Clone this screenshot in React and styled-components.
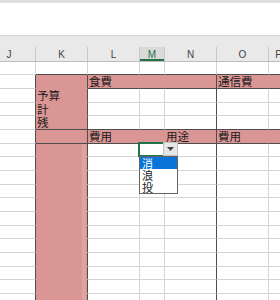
import React from 'react';
import styled, { createGlobalStyle } from 'styled-components';

const GlobalStyle = createGlobalStyle`
  html, body { margin: 0; padding: 0; background: #fff; }
  body { font-family: "Liberation Sans", Arial, sans-serif; }
`;

const COLS = '53px 52px 52px 25px 52px 52px 20px';
const PINK = '#da9694';
const WHITE = '#ffffff';
const GRID = '#d4d4d4';
const DARK = '#4d4d4d';
const NONE = 'transparent';

const Sheet = styled.div`
  width: 280px;
  height: 300px;
  overflow: hidden;
  background: #fff;
  display: flex;
  flex-direction: column;
`;

const TopStrip = styled.div`
  flex: none;
  height: 3px;
  background: #dedede;
`;

const FormulaArea = styled.div`
  flex: none;
  height: 32px;
  background: #fff;
`;

const GridArea = styled.div`
  margin-left: -17px;
  display: flex;
  flex-direction: column;
`;

const HeaderRow = styled.div`
  display: grid;
  grid-template-columns: ${COLS};
  align-items: end;
  height: 27px;
  box-sizing: border-box;
  border-top: 1px solid #d6d6d6;
  border-bottom: 1px solid #bdbdbd;
  background: #e9e9e9;
`;

const HeaderCell = styled.div`
  height: 14px;
  box-sizing: border-box;
  border-right: 1px solid #c9c9c9;
  display: flex;
  align-items: flex-end;
  justify-content: center;
  font-family: "Liberation Sans", Arial, sans-serif;
  font-size: 10px;
  line-height: 10px;
  color: ${p => (p.$selected ? '#217346' : '#444')};
  background: ${p => (p.$selected ? '#d9d9d9' : 'transparent')};
  box-shadow: ${p => (p.$selected ? 'inset 0 -2px 0 #217346' : 'none')};
  padding-bottom: 1px;
`;

const BodyRow = styled.div`
  display: grid;
  grid-template-columns: ${COLS};
  height: ${p => p.$h}px;
`;

const Cell = styled.div`
  box-sizing: border-box;
  position: ${p => (p.$active ? 'relative' : 'static')};
  background: ${p =>
    p.$stripe
      ? `linear-gradient(to right, ${PINK} 0 46px, #dfa3a1 46px 50px, ${PINK} 50px)`
      : p.$fill};
  border-right: 1px solid ${p => p.$r};
  border-bottom: 1px solid ${p => p.$b};
  padding-left: 1px;
  font-family: "Noto Sans CJK JP", "Noto Sans CJK SC", sans-serif;
  font-size: 11.5px;
  line-height: ${p => p.$h - 1}px;
  color: #1a1a1a;
  white-space: nowrap;
`;

const ActiveFrame = styled.div`
  position: absolute;
  left: -2px;
  top: -2px;
  width: 27px;
  height: 15px;
  box-sizing: border-box;
  border: 2px solid #217346;
  z-index: 2;
`;

const DropButton = styled.div`
  position: absolute;
  left: 23px;
  top: -2px;
  width: 15px;
  height: 14px;
  box-sizing: border-box;
  background: #e6e6e6;
  border: 1px solid #c2c2c2;
  display: flex;
  align-items: center;
  justify-content: center;
  z-index: 3;
`;

const DropList = styled.div`
  position: absolute;
  left: -1px;
  top: 12px;
  width: 39px;
  box-sizing: border-box;
  background: #fff;
  border: 1px solid #646464;
  display: flex;
  flex-direction: column;
  z-index: 3;
`;

const DropItem = styled.div`
  height: 12px;
  padding-left: 2px;
  font-family: "Noto Sans CJK JP", "Noto Sans CJK SC", sans-serif;
  font-size: 11px;
  line-height: 12px;
  color: ${p => (p.$hl ? '#ffffff' : '#1a1a1a')};
  background: ${p => (p.$hl ? '#0a74da' : 'transparent')};
`;

const LETTERS = ['J', 'K', 'L', 'M', 'N', 'O', 'P'];
const HEIGHTS = [13, 14, 14];

const c = (fill, r, b, text = '', extra = {}) => ({ fill, r, b, text, ...extra });

function rowCells(i) {
  if (i === 0) {
    return LETTERS.map((_, j) => c(WHITE, GRID, j === 0 ? GRID : DARK));
  }
  if (i === 1) {
    return [
      c(WHITE, DARK, GRID),
      c(PINK, DARK, NONE),
      c(PINK, NONE, DARK, '食費'),
      c(PINK, NONE, DARK),
      c(PINK, DARK, DARK),
      c(PINK, NONE, DARK, '通信費'),
      c(PINK, NONE, DARK),
    ];
  }
  if (i >= 2 && i <= 4) {
    const label = ['予算', '計', '残'][i - 2];
    const bot = i === 4 ? DARK : GRID;
    return [
      c(WHITE, DARK, GRID),
      c(PINK, DARK, i === 4 ? DARK : NONE, label),
      c(WHITE, GRID, bot),
      c(WHITE, GRID, bot),
      c(WHITE, DARK, bot),
      c(WHITE, GRID, bot),
      c(WHITE, GRID, bot),
    ];
  }
  if (i === 5) {
    return [
      c(WHITE, DARK, GRID),
      c(PINK, DARK, DARK),
      c(PINK, NONE, DARK, '費用'),
      c(PINK, NONE, DARK),
      c(PINK, DARK, DARK, '用途'),
      c(PINK, NONE, DARK, '費用'),
      c(PINK, NONE, DARK),
    ];
  }
  return [
    c(WHITE, DARK, GRID),
    c(PINK, DARK, NONE, '', { stripe: true }),
    c(WHITE, GRID, GRID),
    c(WHITE, GRID, GRID, '', { active: i === 6 }),
    c(WHITE, DARK, GRID),
    c(WHITE, GRID, GRID),
    c(WHITE, GRID, GRID),
  ];
}

const ROWS = Array.from({ length: 18 }, (_, i) => ({
  h: HEIGHTS[i % 3],
  cells: rowCells(i),
}));

const OPTIONS = ['消', '浪', '投'];

function Arrow() {
  return (
    <svg width="7" height="4" viewBox="0 0 7 4">
      <polygon points="0,0 7,0 3.5,4" fill="#444" />
    </svg>
  );
}

export default function App() {
  return (
    <>
      <GlobalStyle />
      <Sheet>
        <TopStrip />
        <FormulaArea />
        <GridArea>
          <HeaderRow>
            {LETTERS.map(l => (
              <HeaderCell key={l} $selected={l === 'M'}>
                {l}
              </HeaderCell>
            ))}
          </HeaderRow>
          {ROWS.map((row, i) => (
            <BodyRow key={i} $h={row.h}>
              {row.cells.map((cell, j) => (
                <Cell
                  key={j}
                  $h={row.h}
                  $fill={cell.fill}
                  $r={cell.r}
                  $b={cell.b}
                  $stripe={cell.stripe}
                  $active={cell.active}
                >
                  {cell.text}
                  {cell.active && (
                    <>
                      <ActiveFrame />
                      <DropButton>
                        <Arrow />
                      </DropButton>
                      <DropList>
                        {OPTIONS.map((o, k) => (
                          <DropItem key={o} $hl={k === 0}>
                            {o}
                          </DropItem>
                        ))}
                      </DropList>
                    </>
                  )}
                </Cell>
              ))}
            </BodyRow>
          ))}
        </GridArea>
      </Sheet>
    </>
  );
}
